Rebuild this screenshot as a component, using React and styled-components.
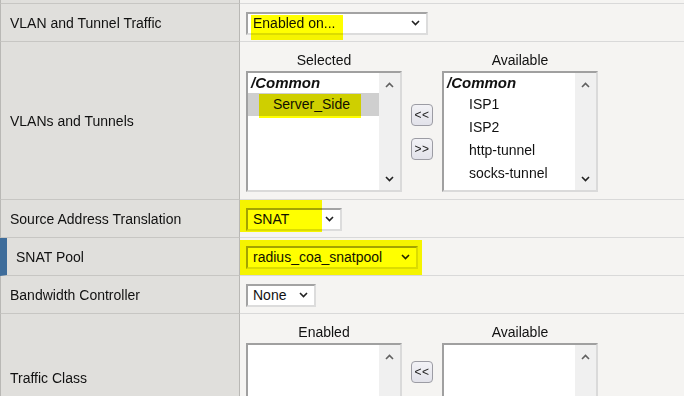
import React from "react";
import styled, { createGlobalStyle } from "styled-components";

const GlobalStyle = createGlobalStyle`
  html, body {
    margin: 0;
    padding: 0;
    background: #f5f4f2;
    overflow: hidden;
  }
  body {
    font-family: "Liberation Sans", Arial, sans-serif;
    font-size: 14px;
    color: #111;
  }
`;

const Table = styled.div`
  display: grid;
  grid-template-columns: 240px 1fr;
  width: 684px;
`;

const Label = styled.div`
  display: flex;
  align-items: center;
  box-sizing: border-box;
  height: ${(p) => p.$h + 1}px;
  padding-left: 9px;
  background: #e0dfdc;
  border-left: ${(p) => (p.$marked ? "7px solid #3f6d9b" : "1px solid #b9b8b5")};
  border-right: 1px solid #b9b8b5;
  border-bottom: 1px solid #c7c6c3;
  white-space: nowrap;
`;

const Field = styled.div`
  display: flex;
  align-items: ${(p) => (p.$top ? "flex-start" : "center")};
  box-sizing: border-box;
  height: ${(p) => p.$h + 1}px;
  padding: ${(p) => (p.$top ? "9px 6px 0" : "0 6px")};
  background: #f5f4f2;
  border-bottom: 1px solid #d9d9d9;
  overflow: hidden;
`;

const Select = styled.div`
  position: relative;
  display: flex;
  align-items: center;
  justify-content: space-between;
  box-sizing: border-box;
  width: ${(p) => p.$w}px;
  height: 23px;
  padding: 0 6px 0 5px;
  background: #fff;
  border: 2px solid;
  border-color: #a3a3a3 #dcdcdc #dcdcdc #a3a3a3;
  white-space: nowrap;
  margin-top: 1px;
`;

const Highlight = styled.span`
  position: absolute;
  left: ${(p) => p.$x}px;
  top: ${(p) => p.$y}px;
  width: ${(p) => p.$w}px;
  height: ${(p) => p.$h}px;
  background: #ffff00;
  mix-blend-mode: multiply;
  pointer-events: none;
`;

const Chevron = ({ up }) => (
  <svg width="9" height="6" viewBox="0 0 9 6">
    <path
      d={up ? "M1 5 L4.5 1.5 L8 5" : "M1 1 L4.5 4.5 L8 1"}
      fill="none"
      stroke={up ? "#606060" : "#222"}
      strokeWidth="1.6"
    />
  </svg>
);

const Shuttle = styled.div`
  display: flex;
  align-items: stretch;
`;

const ListColumn = styled.div`
  display: flex;
  flex-direction: column;
  align-items: center;
`;

const ListTitle = styled.div`
  line-height: 18px;
  margin-bottom: 2px;
`;

const ListBox = styled.div`
  display: flex;
  box-sizing: border-box;
  width: 156px;
  height: ${(p) => p.$h}px;
  background: #fff;
  border: 2px solid;
  border-color: #a0a0a0 #dadada #dadada #a0a0a0;
`;

const Options = styled.div`
  flex: 1;
  display: flex;
  flex-direction: column;
`;

const Group = styled.div`
  height: 20px;
  line-height: 20px;
  padding-left: 3px;
  font-weight: bold;
  font-style: italic;
  font-size: 15px;
`;

const Option = styled.div`
  position: relative;
  height: 23px;
  line-height: 23px;
  padding-left: 25px;
  background: ${(p) => (p.$selected ? "#cfcfcf" : "transparent")};
`;

const Scrollbar = styled.div`
  display: flex;
  flex-direction: column;
  justify-content: space-between;
  align-items: center;
  width: 21px;
  padding: 9px 0 8px;
  box-sizing: border-box;
  background: #f0f0f0;
`;

const MoveButtons = styled.div`
  display: flex;
  flex-direction: column;
  justify-content: center;
  align-items: center;
  gap: ${(p) => p.$gap}px;
  width: 40px;
  padding-top: 20px;
`;

const MoveButton = styled.div`
  display: flex;
  align-items: center;
  justify-content: center;
  box-sizing: border-box;
  width: 22px;
  height: 22px;
  border: 1px solid #9c9ca4;
  border-radius: 4px;
  background: linear-gradient(#f2f2f6, #e2e2ea);
  font-size: 12px;
  letter-spacing: 0.5px;
  color: #222;
`;

const List = ({ title, height, items, selected, mark }) => (
  <ListColumn>
    <ListTitle>{title}</ListTitle>
    <ListBox $h={height}>
      <Options>
        {items && <Group>/Common</Group>}
        {items &&
          items.map((it) => (
            <Option key={it} $selected={it === selected}>
              {it === mark && <Highlight $x={11} $y={1} $w={102} $h={24} />}
              {it}
            </Option>
          ))}
      </Options>
      <Scrollbar>
        <Chevron up />
        <Chevron />
      </Scrollbar>
    </ListBox>
  </ListColumn>
);

const Buttons = ({ gap = 12 }) => (
  <MoveButtons $gap={gap}>
    <MoveButton>&lt;&lt;</MoveButton>
    <MoveButton>&gt;&gt;</MoveButton>
  </MoveButtons>
);

export default function App() {
  return (
    <>
      <GlobalStyle />
      <Table>
        <Label $h={3} />
        <Field $h={3} />

        <Label $h={37}>VLAN and Tunnel Traffic</Label>
        <Field $h={37}>
          <Select $w={182}>
            <Highlight $x={3} $y={1} $w={92} $h={25} />
            Enabled on...
            <Chevron />
          </Select>
        </Field>

        <Label $h={157}>VLANs and Tunnels</Label>
        <Field $h={157} $top>
          <Shuttle>
            <List
              title="Selected"
              height={121}
              items={["Server_Side"]}
              selected="Server_Side"
              mark="Server_Side"
            />
            <Buttons />
            <List
              title="Available"
              height={121}
              items={["ISP1", "ISP2", "http-tunnel", "socks-tunnel"]}
            />
          </Shuttle>
        </Field>

        <Label $h={37}>Source Address Translation</Label>
        <Field $h={37}>
          <Select $w={96}>
            <Highlight $x={-12} $y={-10} $w={86} $h={32} />
            SNAT
            <Chevron />
          </Select>
        </Field>

        <Label $h={37} $marked>SNAT Pool</Label>
        <Field $h={37}>
          <Select $w={172}>
            <Highlight $x={-10} $y={-8} $w={184} $h={35} />
            radius_coa_snatpool
            <Chevron />
          </Select>
        </Field>

        <Label $h={37}>Bandwidth Controller</Label>
        <Field $h={37}>
          <Select $w={70}>
            None
            <Chevron />
          </Select>
        </Field>

        <Label $h={128}>Traffic Class</Label>
        <Field $h={128} $top>
          <Shuttle>
            <List title="Enabled" height={94} />
            <Buttons gap={14} />
            <List title="Available" height={94} />
          </Shuttle>
        </Field>
      </Table>
    </>
  );
}
